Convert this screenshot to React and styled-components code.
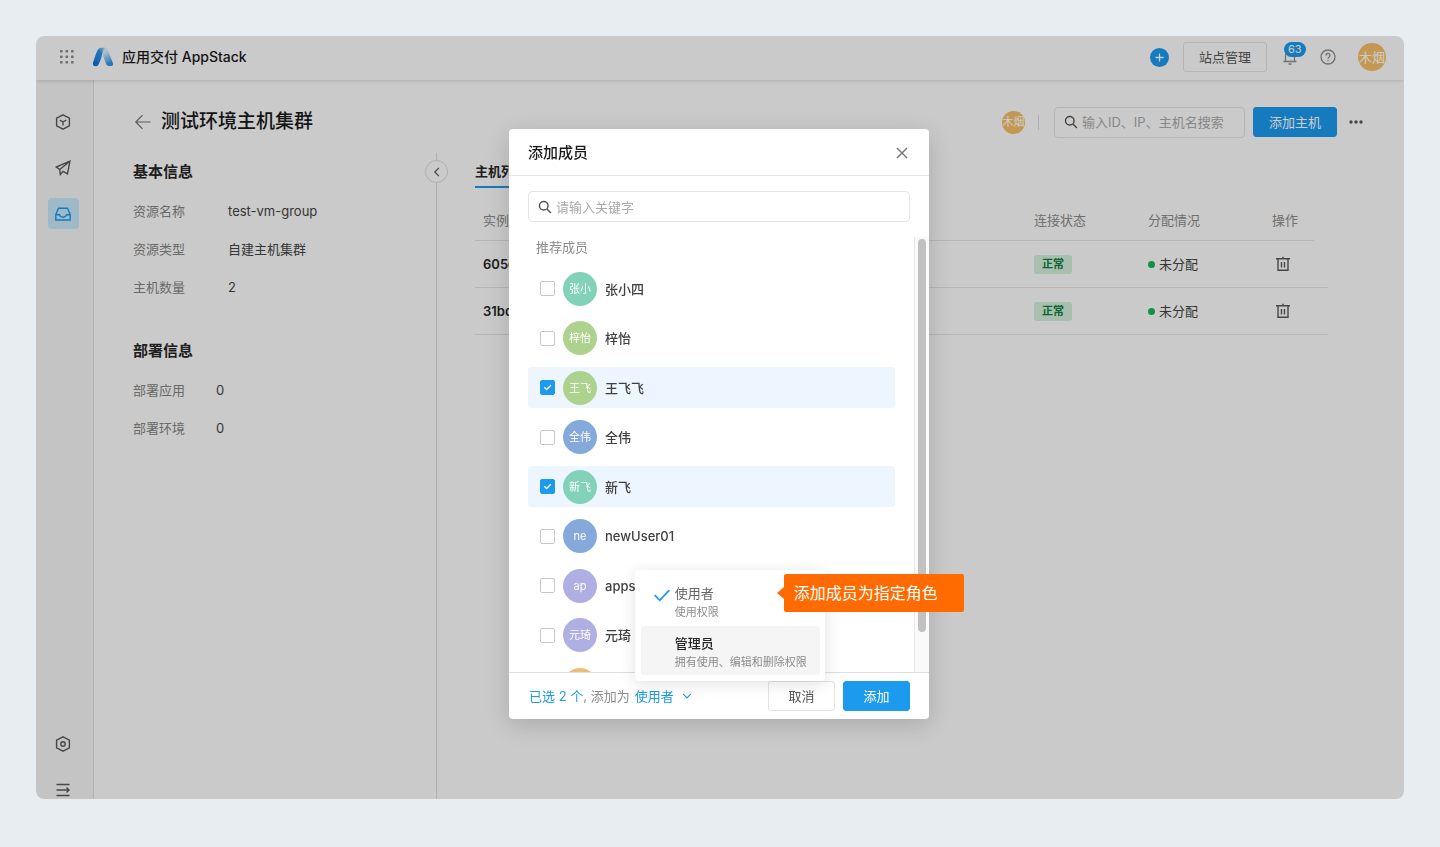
import React, { useState } from "react";
import styled, { createGlobalStyle, css } from "styled-components";

const GlobalStyle = createGlobalStyle`
   * {
      box-sizing: border-box;
   }
   body {
      margin: 0;
      background: #e8edf1;
      color: #333;
      font-family: Inter, "Noto Sans CJK SC", sans-serif;
      font-size: 13px;
      line-height: 20px;
   }
   button, input {
      font: inherit;
      color: inherit;
   }
   button {
      padding: 0;
      border: 0;
      background: none;
      cursor: pointer;
   }
   h1, h2, p, dl, dd, ul {
      margin: 0;
      padding: 0;
   }
   svg {
      display: block;
      flex: none;
   }
`;

const Page = styled.div`
   display: flex;
   min-height: 100vh;
   padding: 36px 36px 48px;
`;

const Window = styled.div`
   position: relative;
   display: flex;
   flex: 1;
   flex-direction: column;
   overflow: hidden;
   border-radius: 8px;
   background: #fdfdfd;
`;

const Mask = styled.div`
   position: absolute;
   inset: 0;
   z-index: 2;
   background: rgba(0, 0, 0, 0.2);
`;

const TopBar = styled.header`
   position: relative;
   z-index: 1;
   display: flex;
   align-items: center;
   height: 44px;
   padding: 0 18px 2px 23px;
   background: #fdfdfd;
   box-shadow: 0 1px 4px rgba(0, 0, 0, 0.14);
`;

const Brand = styled.div`
   display: flex;
   align-items: center;
   gap: 8px;
   margin-left: 17px;
   color: #1a1a1a;
   font-size: 14px;
   font-weight: 500;
`;

const TopActions = styled.div`
   display: flex;
   align-items: center;
   margin-left: auto;
   color: #8c8c8c;
`;

const PlusButton = styled.button`
   display: grid;
   place-items: center;
   width: 19px;
   height: 19px;
   margin-right: 14px;
   border-radius: 50%;
   background: #1b9aee;
   color: #fff;
`;

const Button = styled.button`
   min-width: 67px;
   height: 30px;
   padding: 0 15px;
   border: 1px solid ${(p) => (p.$primary ? "#1b9aee" : "#e3e3e3")};
   border-radius: 3px;
   background: ${(p) => (p.$primary ? "#1b9aee" : "transparent")};
   color: ${(p) => (p.$primary ? "#fff" : "#555")};
`;

const BellButton = styled.button`
   position: relative;
   margin: 0 22px 0 15px;
`;

const Count = styled.span`
   position: absolute;
   left: 2px;
   top: -7px;
   padding: 0 4px;
   border-radius: 8px;
   background: #1b9aee;
   color: #fff;
   font-size: 11px;
   line-height: 15px;
`;

const Avatar = styled.span`
   display: grid;
   flex: none;
   place-items: center;
   place-content: center;
   width: ${(p) => p.$size}px;
   height: ${(p) => p.$size}px;
   overflow: hidden;
   border-radius: 50%;
   background: ${(p) => p.$color};
   color: #fff;
   font-size: ${(p) => p.$font || 11}px;
   white-space: nowrap;
`;

const HelpLink = styled.a`
   margin-right: 22px;
   color: inherit;
`;

const Body = styled.div`
   display: flex;
   flex: 1;
`;

const Rail = styled.nav`
   display: flex;
   flex-direction: column;
   align-items: center;
   gap: 15px;
   width: 58px;
   padding: 26px 3px 0 0;
   border-right: 1px solid #dedede;
   background: #f5f5f5;
`;

const RailLink = styled.a`
   display: grid;
   place-items: center;
   width: 31px;
   height: 31px;
   border-radius: 4px;
   color: ${(p) => (p.$active ? "#1b9aee" : "#595959")};
   background: ${(p) => (p.$active ? "#c6e8fa" : "transparent")};
   &.bottom {
      margin-top: auto;
   }
   &.last {
      margin-bottom: -6px;
   }
`;

const Main = styled.main`
   display: flex;
   flex: 1;
   flex-direction: column;
   min-width: 0;
`;

const TitleRow = styled.div`
   display: flex;
   align-items: center;
   height: 73px;
   padding: 11px 41px 0;
   color: #737373;
   h1 {
      margin-left: 10px;
      color: #1a1a1a;
      font-size: 19px;
      font-weight: 500;
      line-height: 28px;
   }
`;

const Tools = styled.div`
   display: flex;
   align-items: center;
   margin-left: auto;
`;

const Divider = styled.span`
   width: 1px;
   height: 15px;
   margin: 0 15px 0 13px;
   background: #dcdcdc;
`;

const SearchBox = styled.label`
   display: flex;
   align-items: center;
   gap: 4px;
   height: 31px;
   padding: 0 9px;
   border: 1px solid #e3e3e3;
   border-radius: 4px;
   color: #555;
   input {
      flex: 1;
      width: 153px;
      min-width: 0;
      padding: 0;
      border: 0;
      outline: 0;
      background: none;
   }
   input::placeholder {
      color: #aaa;
      opacity: 1;
   }
`;

const ToolButtons = styled.div`
   display: flex;
   align-items: center;
   gap: 12px;
   margin-left: 8px;
`;

const MoreButton = styled.button`
   color: #595959;
`;

const Columns = styled.div`
   display: flex;
   flex: 1;
`;

const Info = styled.section`
   position: relative;
   width: 343px;
   padding: 6px 39px;
   border-right: 1px solid #dcdcdc;
`;

const InfoTitle = styled.h2`
   color: #262626;
   font-size: 15px;
   font-weight: 700;
   line-height: 25px;
`;

const InfoList = styled.dl`
   margin: 17px 0 41px;
   div {
      display: flex;
      margin-bottom: 18px;
   }
   dt {
      width: ${(p) => p.$label}px;
      color: #858585;
   }
   dd {
      color: #444;
   }
`;

const Collapse = styled.button`
   position: absolute;
   top: 7px;
   right: -12px;
   display: grid;
   place-items: center;
   width: 23px;
   height: 23px;
   border: 1px solid #dcdcdc;
   border-radius: 50%;
   background: #fdfdfd;
   color: #555;
`;

const Hosts = styled.section`
   flex: 1;
   min-width: 0;
   padding: 8px 76px 0 38px;
`;

const Tab = styled.button`
   height: 27px;
   padding-bottom: 8px;
   border-bottom: 2px solid #1b9aee;
   color: #262626;
   font-weight: 700;
`;

const HostTable = styled.table`
   width: 100%;
   margin-top: 12px;
   border-collapse: separate;
   border-spacing: 0;
   table-layout: fixed;
   th, td {
      padding: 0 8px;
      border-bottom: 1px solid #e3e3e3;
      text-align: left;
      white-space: nowrap;
   }
   th {
      height: 41px;
      color: #8c8c8c;
      font-weight: 400;
   }
   td {
      height: 47px;
      color: #444;
   }
   td:first-child {
      color: #262626;
      font-weight: 600;
   }
   th:last-child {
      border-bottom: 0;
   }
   th:last-child, td:last-child {
      padding: 0;
   }
`;

const Tag = styled.span`
   display: block;
   width: fit-content;
   padding: 0 8px;
   border-radius: 3px;
   background: #d3efdc;
   color: #15803d;
   font-size: 11px;
   font-weight: 700;
   line-height: 19px;
`;

const Assigned = styled.span`
   display: flex;
   align-items: center;
   gap: 4px;
   &::before {
      content: "";
      width: 7px;
      height: 7px;
      border-radius: 50%;
      background: #18b45b;
   }
`;

const DeleteButton = styled.button`
   display: block;
   margin-left: 3px;
   color: #595959;
`;

const Layer = styled.div`
   position: fixed;
   inset: 0;
   z-index: 3;
   display: flex;
   align-items: center;
   justify-content: center;
   padding: 1px 2px 0 0;
`;

const Dialog = styled.section`
   width: 420px;
   border-radius: 4px;
   background: #fff;
   box-shadow: 0 6px 24px rgba(0, 0, 0, 0.16);
`;

const DialogHead = styled.header`
   display: flex;
   align-items: center;
   justify-content: space-between;
   height: 47px;
   padding: 1px 19px 0;
   border-bottom: 1px solid #e5e5e5;
   color: #1a1a1a;
   h2 {
      font-size: 15px;
      font-weight: 500;
   }
   button {
      color: #737373;
   }
`;

const DialogSearch = styled.div`
   padding: 15px 19px;
   ${SearchBox} {
      border-color: #e5e5e5;
   }
`;

const Scroller = styled.div`
   display: flex;
   height: 435px;
   overflow: hidden;
`;

const MemberList = styled.div`
   flex: 1;
   padding: 0 19px;
   p {
      padding-left: 8px;
      color: #8c8c8c;
   }
`;

const Members = styled.ul`
   display: flex;
   flex-direction: column;
   justify-content: space-between;
   height: 437px;
   margin-top: 11px;
   list-style: none;
`;

const Member = styled.li`
   label {
      display: flex;
      align-items: center;
      gap: 8px;
      height: 41px;
      padding-left: 12px;
      border-radius: 3px;
      background: ${(p) => (p.$checked ? "#edf6fe" : "transparent")};
      color: #404040;
      font-weight: 500;
      cursor: pointer;
   }
   ${Avatar} {
      font-weight: 400;
   }
`;

const Check = styled.input`
   width: 15px;
   height: 15px;
   margin: 0;
   border: 1px solid #c8c8c8;
   border-radius: 2px;
   appearance: none;
   background: #fff;
   &:checked {
      border-color: #1b9aee;
      background: #1b9aee url("data:image/svg+xml,%3Csvg xmlns='http://www.w3.org/2000/svg' viewBox='0 0 13 13' fill='none' stroke='white' stroke-width='1.4'%3E%3Cpath d='M3.300 6.300 5.600 8.500 9.900 4.200'/%3E%3C/svg%3E") center / 13px 13px no-repeat;
   }
`;

const Track = styled.div`
   width: 15px;
   padding: 2px 3px 40px;
   border-left: 1px solid #e8e8e8;
   background: #fafafa;
   &::before {
      content: "";
      display: block;
      width: 8px;
      height: 393px;
      border-radius: 4px;
      background: #c1c1c1;
   }
`;

const DialogFoot = styled.footer`
   display: flex;
   align-items: center;
   gap: 8px;
   height: 47px;
   padding: 0 19px 0 20px;
   border-top: 1px solid #dedede;
   color: #8c8c8c;
`;

const Picked = styled.div`
   display: flex;
   align-items: center;
   gap: 5px;
   margin-right: auto;
   b {
      color: #1b9aee;
      font-weight: 400;
   }
`;

const RolePicker = styled.div`
   position: relative;
`;

const RoleButton = styled.button`
   display: flex;
   align-items: center;
   gap: 8px;
   color: #1b9aee;
`;

const RoleMenu = styled.div`
   position: absolute;
   left: 0;
   bottom: 25px;
   display: flex;
   flex-direction: column;
   gap: 1px;
   width: 190px;
   padding: 6px 5px 6px 6px;
   border-radius: 4px;
   background: #fff;
   box-shadow: 0 3px 16px rgba(0, 0, 0, 0.12);
`;

const RoleItem = styled.button`
   display: grid;
   grid-template-columns: 34px 1fr;
   align-items: start;
   height: 49px;
   padding-top: 7px;
   border-radius: 3px;
   text-align: left;
   color: #666;
   svg {
      margin: 3px 0 0 12px;
      color: #1b9aee;
   }
   strong {
      display: block;
      font-weight: 400;
      line-height: 20px;
   }
   small {
      display: block;
      color: #8c8c8c;
      font-size: 11px;
      line-height: 18px;
      white-space: nowrap;
   }
   ${(p) =>
      p.$hover &&
      css`
         background: #f5f5f5;
         strong {
            color: #262626;
            font-weight: 500;
         }
      `}
`;

const Callout = styled.div`
   position: absolute;
   left: 149px;
   top: 4px;
   width: 180px;
   padding: 0 10px;
   border-radius: 2px;
   background: #ff6b00;
   color: #fff;
   font-size: 16px;
   line-height: 38px;
   white-space: nowrap;
   &::before {
      content: "";
      position: absolute;
      left: -7px;
      top: 13px;
      border: solid transparent;
      border-width: 6px 7px 6px 0;
      border-right-color: #ff6b00;
   }
`;

const Icon = ({ size = 16, width = 1.4, children }) => (
   <svg width={size} height={size} viewBox="0 0 16 16" fill="none" stroke="currentColor" strokeWidth={width} aria-hidden="true">
      {children}
   </svg>
);

const GridIcon = () => (
   <svg width="16" height="16" viewBox="0 0 16 16" fill="#8c8c8c" aria-hidden="true">
      {[1, 6.5, 12].map((y) => [1, 6.5, 12].map((x) => <rect key={`${x}-${y}`} x={x} y={y} width="2.6" height="2.6" rx="0.6" />))}
   </svg>
);

const Logo = () => (
   <svg width="22" height="20" viewBox="0 0 22 20" aria-hidden="true">
      <defs>
         <linearGradient id="logoLeft" x1="0.2" y1="1" x2="0.8" y2="0">
            <stop offset="0" stopColor="#0f7fe0" />
            <stop offset="0.7" stopColor="#2491e8" />
            <stop offset="1" stopColor="#8ccaf5" />
         </linearGradient>
         <linearGradient id="logoRight" x1="0.3" y1="0" x2="0.7" y2="1">
            <stop offset="0.2" stopColor="#dceffb" />
            <stop offset="0.9" stopColor="#2a96ea" />
         </linearGradient>
      </defs>
      <path d="M10 1h3.300c1.200 0 1.900.5 2.300 1.700L20.900 16c.7 1.800-.3 3-1.900 3h-1.800c-1.700 0-2.600-.7-3.200-2.200L10.300 7Z" fill="url(#logoRight)" />
      <path d="M9 .8h4.300C11.300 1.800 10.700 4.800 9.800 8.500 9 12 8 15 6.500 17.400 5.700 18.700 4.800 19.200 3.600 19.200 1.600 19.200.4 17.600 1 15.800 2.200 12 3.800 7 5.500 3.500 6.400 1.600 7.300.8 9 .8Z" fill="url(#logoLeft)" />
      <circle cx="3.600" cy="16.600" r="2.500" fill="#0c74d4" />
   </svg>
);

const SearchIcon = () => (
   <Icon size={14} width={1.6}>
      <circle cx="6.600" cy="6.600" r="4.900" />
      <path d="m10.200 10.200 4.600 4.600" />
   </Icon>
);

const TrashIcon = () => (
   <Icon>
      <path d="M1 2.800h14M3 2.800v11.400h10V2.800M8 .8v2M6.500 6v5.500M9.500 6v5.500" />
   </Icon>
);

const details = [
   ["资源名称", "test-vm-group"],
   ["资源类型", "自建主机集群"],
   ["主机数量", "2"],
];
const deploys = [
   ["部署应用", "0"],
   ["部署环境", "0"],
];
const hosts = ["605c", "31bc"];

const people = [
   { id: 1, name: "张小四", short: "张小", color: "#82d1b9" },
   { id: 2, name: "梓怡", short: "梓怡", color: "#add28d" },
   { id: 3, name: "王飞飞", short: "王飞", color: "#add28d" },
   { id: 4, name: "全伟", short: "全伟", color: "#85a9da" },
   { id: 5, name: "新飞", short: "新飞", color: "#82d1b9" },
   { id: 6, name: "newUser01", short: "ne", color: "#85a9da" },
   { id: 7, name: "apps", short: "ap", color: "#afafe3" },
   { id: 8, name: "元琦", short: "元琦", color: "#afafe3" },
   { id: 9, name: "", short: "", color: "#edbd75" },
];

const InfoRows = ({ rows, label }) => (
   <InfoList $label={label}>
      {rows.map(([key, value]) => (
         <div key={key}>
            <dt>{key}</dt>
            <dd>{value}</dd>
         </div>
      ))}
   </InfoList>
);

const AddMembers = () => {
   const [picked, setPicked] = useState([3, 5]);
   const toggle = (id) => setPicked(picked.includes(id) ? picked.filter((n) => n !== id) : [...picked, id]);
   return (
      <Layer>
         <Dialog role="dialog" aria-labelledby="dialog-title">
            <DialogHead>
               <h2 id="dialog-title">添加成员</h2>
               <button aria-label="关闭">
                  <Icon width={1.4}>
                     <path d="m3 3 10 10M13 3 3 13" />
                  </Icon>
               </button>
            </DialogHead>
            <DialogSearch>
               <SearchBox>
                  <SearchIcon />
                  <input placeholder="请输入关键字" aria-label="请输入关键字" />
               </SearchBox>
            </DialogSearch>
            <Scroller>
               <MemberList>
                  <p>推荐成员</p>
                  <Members>
                     {people.map((item) => (
                        <Member key={item.id} $checked={picked.includes(item.id)}>
                           <label>
                              <Check type="checkbox" checked={picked.includes(item.id)} onChange={() => toggle(item.id)} />
                              <Avatar $size={34} $color={item.color}>{item.short}</Avatar>
                              {item.name}
                           </label>
                        </Member>
                     ))}
                  </Members>
               </MemberList>
               <Track />
            </Scroller>
            <DialogFoot>
               <Picked>
                  <span><b>已选 {picked.length} 个</b>, 添加为</span>
                  <RolePicker>
                     <RoleButton aria-haspopup="menu" aria-expanded="true">
                        使用者
                        <Icon size={10} width={2}>
                           <path d="m2 5 6 6 6-6" />
                        </Icon>
                     </RoleButton>
                     <RoleMenu role="menu">
                        <RoleItem role="menuitem">
                           <Icon size={18} width={1.6}>
                              <path d="m1.500 8.200 4.500 4.500 8.500-9" />
                           </Icon>
                           <span>
                              <strong>使用者</strong>
                              <small>使用权限</small>
                           </span>
                        </RoleItem>
                        <RoleItem role="menuitem" $hover>
                           <i />
                           <span>
                              <strong>管理员</strong>
                              <small>拥有使用、编辑和删除权限</small>
                           </span>
                        </RoleItem>
                        <Callout>添加成员为指定角色</Callout>
                     </RoleMenu>
                  </RolePicker>
               </Picked>
               <Button>取消</Button>
               <Button $primary>添加</Button>
            </DialogFoot>
         </Dialog>
      </Layer>
   );
};

const App = () => (
   <>
      <GlobalStyle />
      <Page>
         <Window>
            <TopBar>
               <GridIcon />
               <Brand>
                  <Logo />
                  应用交付 AppStack
               </Brand>
               <TopActions>
                  <PlusButton aria-label="新建">
                     <Icon size={13} width={1.6}>
                        <path d="M8 3v10M3 8h10" />
                     </Icon>
                  </PlusButton>
                  <Button>站点管理</Button>
                  <BellButton aria-label="通知">
                     <Icon width={1.3}>
                        <path d="M3.500 12V7a4.500 4.500 0 0 1 9 0v5M1.500 12.500h13M6.500 15h3" />
                     </Icon>
                     <Count>63</Count>
                  </BellButton>
                  <HelpLink href="#help" aria-label="帮助">
                     <Icon width={1.3}>
                        <circle cx="8" cy="8" r="7" />
                        <path d="M6 6.500a2 2 0 1 1 3 1.700c-.7.400-1 .7-1 1.500M8 11v1.300" />
                     </Icon>
                  </HelpLink>
                  <Avatar $size={28} $font={13} $color="#f5bf69">木烟</Avatar>
               </TopActions>
            </TopBar>
            <Body>
               <Rail>
                  <RailLink href="#apps" aria-label="应用">
                     <Icon>
                        <path d="M8 .8 14.400 4.200v7.600L8 15.200 1.600 11.800V4.200ZM4.800 6.200 8 8l3.200-1.800M8 8v3.600" />
                     </Icon>
                  </RailLink>
                  <RailLink href="#deploy" aria-label="部署">
                     <Icon>
                        <path d="M14.900 1.200 1.200 7l3.500 2.500.6 5 2.900-3.200 4.300 2.500ZM4.700 9.500l10.200-8.300" />
                     </Icon>
                  </RailLink>
                  <RailLink href="#resource" aria-label="资源" $active>
                     <Icon>
                        <path d="M.8 8.500 3.500 2.300h9L15.200 8.500v5.500H.8ZM.8 8.700h3.700c.4 1.600 1.500 2.500 3.500 2.500s3.100-.9 3.500-2.500h3.700" />
                     </Icon>
                  </RailLink>
                  <RailLink href="#settings" aria-label="设置" className="bottom">
                     <Icon>
                        <path d="M8 .8 14.400 4.200v7.600L8 15.200 1.600 11.800V4.200Z" />
                        <circle cx="8" cy="8" r="2.200" />
                     </Icon>
                  </RailLink>
                  <RailLink href="#expand" aria-label="展开" className="last">
                     <Icon>
                        <path d="M1.500 2.500h13M1.500 8h12M1.500 13.500h13M11.500 5.500 14 8l-2.500 2.500" />
                     </Icon>
                  </RailLink>
               </Rail>
               <Main>
                  <TitleRow>
                     <Icon width={1.2}>
                        <path d="M15.500 8H1M7.500 1.200.8 8l6.700 6.800" />
                     </Icon>
                     <h1>测试环境主机集群</h1>
                     <Tools>
                        <Avatar $size={23} $color="#f5bf69">木烟</Avatar>
                        <Divider />
                        <SearchBox>
                           <SearchIcon />
                           <input placeholder="输入ID、IP、主机名搜索" aria-label="输入ID、IP、主机名搜索" />
                        </SearchBox>
                        <ToolButtons>
                           <Button $primary>添加主机</Button>
                           <MoreButton aria-label="更多">
                              <svg width="14" height="14" viewBox="0 0 14 14" fill="currentColor" aria-hidden="true">
                                 <circle cx="2" cy="7" r="1.700" />
                                 <circle cx="7" cy="7" r="1.700" />
                                 <circle cx="12" cy="7" r="1.700" />
                              </svg>
                           </MoreButton>
                        </ToolButtons>
                     </Tools>
                  </TitleRow>
                  <Columns>
                     <Info>
                        <InfoTitle>基本信息</InfoTitle>
                        <InfoRows rows={details} label={95} />
                        <InfoTitle>部署信息</InfoTitle>
                        <InfoRows rows={deploys} label={83} />
                        <Collapse aria-label="收起">
                           <Icon size={12} width={1.6}>
                              <path d="M10.500 2.500 5 8l5.500 5.500" />
                           </Icon>
                        </Collapse>
                     </Info>
                     <Hosts>
                        <Tab>主机列表</Tab>
                        <HostTable>
                           <colgroup>
                              <col />
                              <col width="114" />
                              <col width="124" />
                              <col width="50" />
                              <col width="14" />
                           </colgroup>
                           <thead>
                              <tr>
                                 <th>实例</th>
                                 <th>连接状态</th>
                                 <th>分配情况</th>
                                 <th>操作</th>
                                 <th />
                              </tr>
                           </thead>
                           <tbody>
                              {hosts.map((host) => (
                                 <tr key={host}>
                                    <td>{host}</td>
                                    <td><Tag>正常</Tag></td>
                                    <td><Assigned>未分配</Assigned></td>
                                    <td>
                                       <DeleteButton aria-label="删除"><TrashIcon /></DeleteButton>
                                    </td>
                                    <td />
                                 </tr>
                              ))}
                           </tbody>
                        </HostTable>
                     </Hosts>
                  </Columns>
               </Main>
            </Body>
            <Mask />
         </Window>
      </Page>
      <AddMembers />
   </>
);

export default App;
